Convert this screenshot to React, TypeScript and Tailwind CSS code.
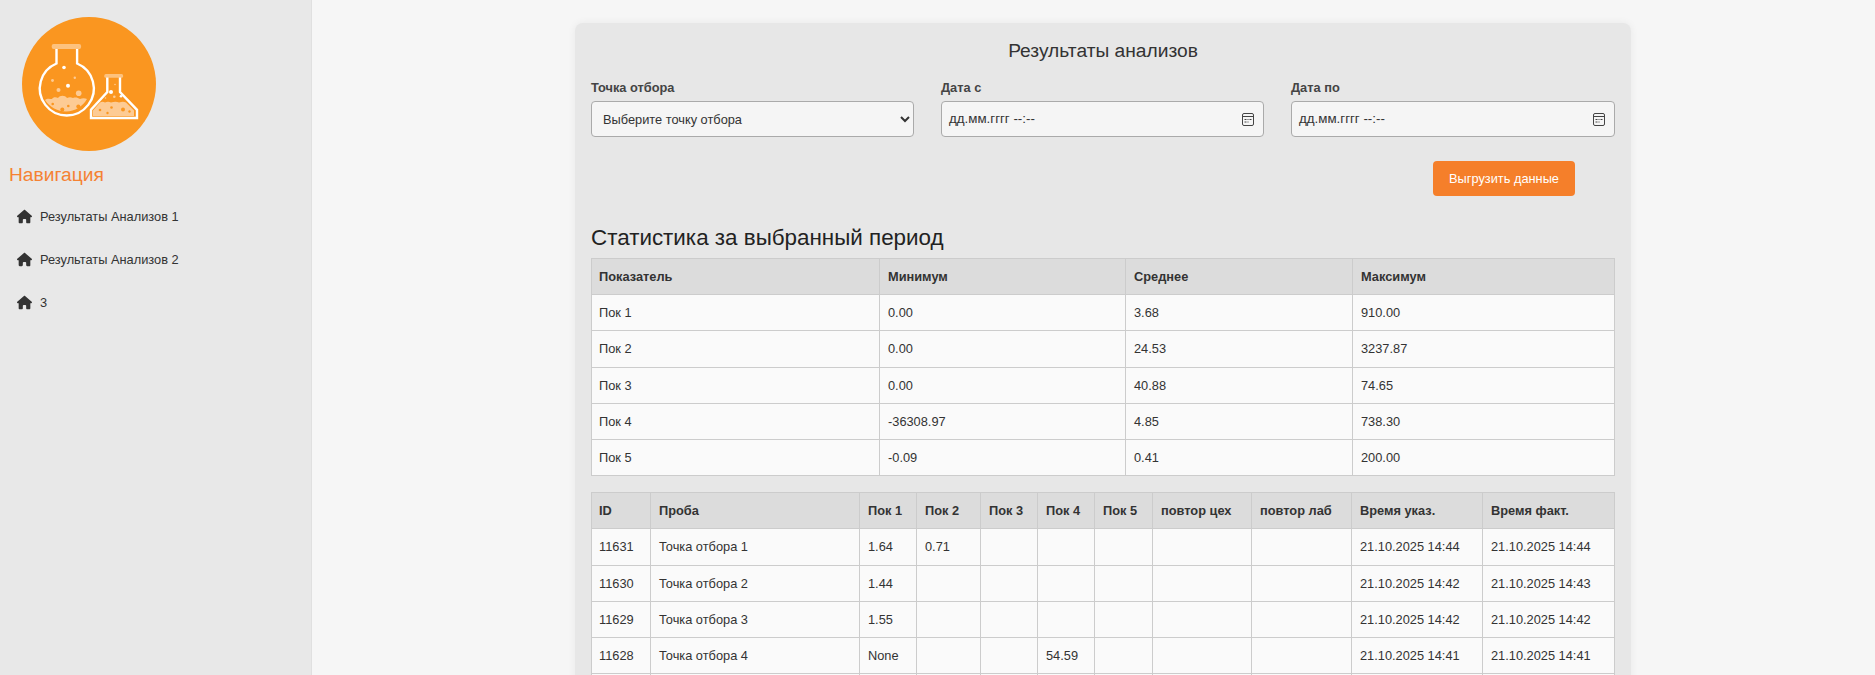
import { FaHouse } from "react-icons/fa6";

const statsCols = ["w-[288px]", "w-[246px]", "w-[227px]", "w-[262px]"];
const statsHead = ["Показатель", "Минимум", "Среднее", "Максимум"];
const statsRows = [
  ["Пок 1", "0.00", "3.68", "910.00"],
  ["Пок 2", "0.00", "24.53", "3237.87"],
  ["Пок 3", "0.00", "40.88", "74.65"],
  ["Пок 4", "-36308.97", "4.85", "738.30"],
  ["Пок 5", "-0.09", "0.41", "200.00"],
];

const dataHead = [
  "ID", "Проба", "Пок 1", "Пок 2", "Пок 3", "Пок 4", "Пок 5",
  "повтор цех", "повтор лаб", "Время указ.", "Время факт.",
];
const dataRows = [
  ["11631", "Точка отбора 1", "1.64", "0.71", "", "", "", "", "", "21.10.2025 14:44", "21.10.2025 14:44"],
  ["11630", "Точка отбора 2", "1.44", "", "", "", "", "", "", "21.10.2025 14:42", "21.10.2025 14:43"],
  ["11629", "Точка отбора 3", "1.55", "", "", "", "", "", "", "21.10.2025 14:42", "21.10.2025 14:42"],
  ["11628", "Точка отбора 4", "None", "", "", "54.59", "", "", "", "21.10.2025 14:41", "21.10.2025 14:41"],
  ["", "", "", "", "", "", "", "", "", "", ""],
];

const Logo = () => (
  <svg viewBox="0 0 134 134" className="w-[134px] h-[134px] block">
    <circle cx="67" cy="67" r="67" fill="#fa9620" />
    <rect x="29.7" y="27" width="29.4" height="5" rx="2" fill="#fdc27e" />
    <path
      d="M23 83c2-2 5-1 7-1 1-2 4-2 6-1 2-3 7-3 9 0 2-1 4-1 6 0 3-1 5 0 7 1 2-1 5-1 7 0A24.500 24.500 0 0 1 23 83z"
      fill="#fdcb94"
    />
    <path
      d="M34.500 32V46.500A27 27 0 1 0 55.100 46.500V32"
      fill="none"
      stroke="#fff"
      strokeWidth="2.400"
    />
    <circle cx="42" cy="50.500" r="1.800" fill="#fff" />
    <circle cx="46" cy="68.700" r="2" fill="#fff" />
    <circle cx="30.500" cy="63.500" r="1.400" fill="#fdcb94" />
    <circle cx="52.800" cy="60.700" r="1.200" fill="#fdcb94" />
    <circle cx="36.500" cy="73" r="2" fill="#fdcb94" />
    <circle cx="56.700" cy="76.300" r="2.800" fill="#fdcb94" />
    <circle cx="30.700" cy="87" r="1.300" fill="#fa9620" />
    <circle cx="40.300" cy="92.500" r="2" fill="#fa9620" />
    <circle cx="46.300" cy="89" r="1.300" fill="#fa9620" />
    <circle cx="56.300" cy="89.500" r="2" fill="#fa9620" />

    <rect x="82.300" y="57" width="18.800" height="3.800" rx="1.500" fill="#fdc27e" />
    <path
      d="M71 99V93.500L78 85.500c2-1 3-1 5 0 2-1 4-1 6 0 3-1 6-1 8 0 3-1 5-1 7 0l8 8V99z"
      fill="#fdcb94"
    />
    <path
      d="M85.300 60.500V75L69 92.800V101H115V92.800L98 75V60.500"
      fill="none"
      stroke="#fff"
      strokeWidth="2.400"
    />
    <circle cx="89" cy="75" r="2" fill="#fff" />
    <circle cx="92.300" cy="79.700" r="1.300" fill="#fdcb94" />
    <circle cx="99" cy="79.300" r="1.300" fill="#fff" />
    <circle cx="93" cy="67.500" r="0.800" fill="#fdcb94" />
    <circle cx="83.500" cy="81" r="0.800" fill="#fdcb94" />
    <circle cx="78" cy="93" r="1.300" fill="#fa9620" />
    <circle cx="89.500" cy="90.500" r="1.300" fill="#fa9620" />
    <circle cx="85.500" cy="96" r="1.200" fill="#fa9620" />
    <circle cx="101" cy="92.500" r="2" fill="#fa9620" />
    <circle cx="107.500" cy="94.500" r="1.200" fill="#fa9620" />
  </svg>
);

const CalendarIcon = () => (
  <svg viewBox="0 0 12 13" className="w-[12px] h-[13px] shrink-0">
    <rect x="0.500" y="0.500" width="11" height="12" rx="1.500" fill="none" stroke="#444" />
    <path d="M1 3.500h10" stroke="#444" />
    <path d="M2.500 6.500h2M5.500 6.500h1M7.500 6.500h2M2.500 9h2M5.500 9h1" stroke="#444" />
  </svg>
);

const DateField = ({ label }: { label: string }) => (
  <div className="w-[323px]">
    <div className="text-[12.800px] leading-[20px] mb-[3px] font-bold text-[#444]">{label}</div>
    <div className="h-[36px] flex items-center justify-between pl-[7px] pr-[9px] rounded-[4px] border border-[#aaa] bg-[#f5f5f5] text-[13.333px] text-[#333]">
      <span>дд.мм.гггг --:--</span>
      <CalendarIcon />
    </div>
  </div>
);

const App = () => {
  return (
    <div className="h-screen overflow-hidden flex bg-[#f6f6f6] text-[#333] font-['Liberation_Sans',Arial,sans-serif]">
      <aside className="w-[312px] shrink-0 bg-[#e8e8e8] border-r border-[#e0e0e0]">
        <div className="pt-[17px] pl-[22px]">
          <Logo />
        </div>
        <h2 className="mt-[12px] pl-[9px] text-[19.200px] leading-[24px] text-[#f58233]">Навигация</h2>
        <nav className="mt-[8px]">
          {["Результаты Анализов 1", "Результаты Анализов 2", "3"].map((item) => (
            <a key={item} className="h-[43px] flex items-center pl-[17px] gap-[8px] text-[12.800px] text-[#333]">
              <FaHouse className="w-[15px] h-[15px] text-[#333]" />
              {item}
            </a>
          ))}
        </nav>
      </aside>

      <main className="flex-1 pl-[263px] pt-[23px]">
        <section className="w-[1056px] rounded-[8px] bg-[#e7e7e7] shadow-[0_0_8px_rgba(0,0,0,0.06)] px-[16px] pt-[15px]">
          <h1 className="text-center text-[19.200px] leading-[26px] text-[#333]">Результаты анализов</h1>

          <div className="mt-[14px] flex gap-[27px]">
            <div className="w-[323px]">
              <div className="text-[12.800px] leading-[20px] mb-[3px] font-bold text-[#444]">Точка отбора</div>
              <select className="w-full h-[36px] pl-[7px] pr-[4px] rounded-[4px] border border-[#aaa] bg-[#f5f5f5] text-[12.800px] text-[#333]">
                <option>Выберите точку отбора</option>
              </select>
            </div>
            <DateField label="Дата с" />
            <div className="flex-1">
              <div className="text-[12.800px] leading-[20px] mb-[3px] font-bold text-[#444]">Дата по</div>
              <div className="h-[36px] flex items-center justify-between pl-[7px] pr-[9px] rounded-[4px] border border-[#aaa] bg-[#f5f5f5] text-[13.333px] text-[#333]">
                <span>дд.мм.гггг --:--</span>
                <CalendarIcon />
              </div>
            </div>
          </div>

          <div className="mt-[24px] pr-[40px] flex justify-end">
            <button className="w-[142px] h-[35px] rounded-[4px] bg-[#f57f2a] text-white text-[12.800px]">Выгрузить данные</button>
          </div>

          <h2 className="mt-[28px] text-[22.400px] leading-[28px] text-[#222]">Статистика за выбранный период</h2>

          <table className="mt-[6px] w-[1023px] table-fixed border-collapse text-[12.800px]">
            <colgroup>
              {statsCols.map((c) => (
                <col key={c} className={c} />
              ))}
            </colgroup>
            <thead>
              <tr>
                {statsHead.map((h) => (
                  <th key={h} className="h-[36.200px] px-[8px] first:pl-[7px] text-left font-bold bg-[#dcdcdc] border border-[#ccc]">{h}</th>
                ))}
              </tr>
            </thead>
            <tbody>
              {statsRows.map((row) => (
                <tr key={row[0]}>
                  {row.map((v, i) => (
                    <td key={i} className="h-[36.200px] px-[8px] first:pl-[7px] bg-[#fafafa] border border-[#ccc]">{v}</td>
                  ))}
                </tr>
              ))}
            </tbody>
          </table>

          <table className="mt-[16px] w-[1023px] table-fixed border-collapse text-[12.800px]">
            <colgroup>
              <col className="w-[59px]" />
              <col className="w-[209px]" />
              <col className="w-[57px]" />
              <col className="w-[64px]" />
              <col className="w-[57px]" />
              <col className="w-[57px]" />
              <col className="w-[58px]" />
              <col className="w-[99px]" />
              <col className="w-[100px]" />
              <col className="w-[131px]" />
              <col className="w-[132px]" />
            </colgroup>
            <thead>
              <tr>
                {dataHead.map((h) => (
                  <th key={h} className="h-[36.200px] px-[8px] first:pl-[7px] text-left font-bold whitespace-nowrap bg-[#dcdcdc] border border-[#ccc]">{h}</th>
                ))}
              </tr>
            </thead>
            <tbody>
              {dataRows.map((row, r) => (
                <tr key={r}>
                  {row.map((v, i) => (
                    <td key={i} className="h-[36.200px] px-[8px] first:pl-[7px] whitespace-nowrap bg-[#fafafa] border border-[#ccc]">{v}</td>
                  ))}
                </tr>
              ))}
            </tbody>
          </table>
        </section>
      </main>
    </div>
  );
};

export default App;
